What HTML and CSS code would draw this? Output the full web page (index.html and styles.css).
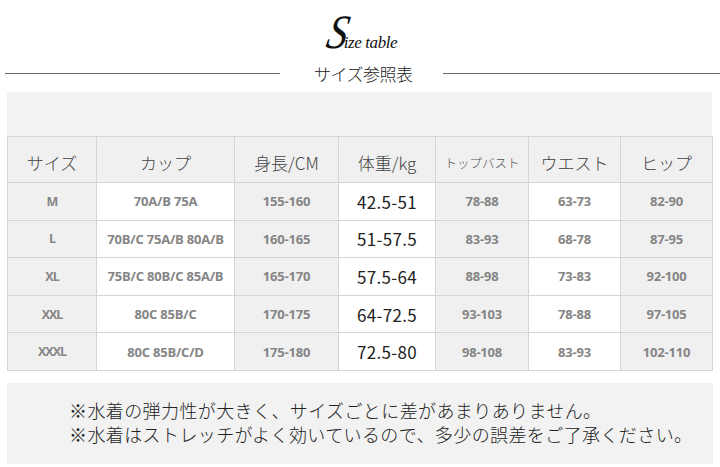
FILE: index.html
```html
<!DOCTYPE html>
<html lang="ja">
<head>
<meta charset="utf-8">
<link rel="stylesheet" href="styles.css">
</head>
<body>
<div class="page">
  <header class="head">
    <div class="script-title"><span class="cap">S</span><span class="rest">ize table</span></div>
    <div class="subtitle">
      <span class="rule rule-left"></span>
      <span class="subtitle-text">サイズ参照表</span>
      <span class="rule rule-right"></span>
    </div>
  </header>

  <section class="panel">
    <table class="size-table">
      <colgroup>
        <col class="c1"><col class="c2"><col class="c3"><col class="c4"><col class="c5"><col class="c6"><col class="c7">
      </colgroup>
      <thead>
        <tr>
          <th>サイズ</th>
          <th>カップ</th>
          <th>身長/CM</th>
          <th>体重/kg</th>
          <th class="small">トップバスト</th>
          <th>ウエスト</th>
          <th>ヒップ</th>
        </tr>
      </thead>
      <tbody>
        <tr>
          <td class="g sz">M</td><td class="w b">70A/B 75A</td><td class="g b">155-160</td><td class="w kg">42.5-51</td><td class="g b">78-88</td><td class="w b">63-73</td><td class="g b">82-90</td>
        </tr>
        <tr>
          <td class="g sz">L</td><td class="w b">70B/C 75A/B 80A/B</td><td class="g b">160-165</td><td class="w kg">51-57.5</td><td class="g b">83-93</td><td class="w b">68-78</td><td class="g b">87-95</td>
        </tr>
        <tr>
          <td class="g sz">XL</td><td class="w b">75B/C 80B/C 85A/B</td><td class="g b">165-170</td><td class="w kg">57.5-64</td><td class="g b">88-98</td><td class="w b">73-83</td><td class="g b">92-100</td>
        </tr>
        <tr>
          <td class="g sz">XXL</td><td class="w b">80C 85B/C</td><td class="g b">170-175</td><td class="w kg">64-72.5</td><td class="g b">93-103</td><td class="w b">78-88</td><td class="g b">97-105</td>
        </tr>
        <tr>
          <td class="g sz">XXXL</td><td class="w b">80C 85B/C/D</td><td class="g b">175-180</td><td class="w kg">72.5-80</td><td class="g b">98-108</td><td class="w b">83-93</td><td class="g b">102-110</td>
        </tr>
      </tbody>
    </table>
  </section>

  <section class="note">
    <p>※水着の弾力性が大きく、サイズごとに差があまりありません。</p>
    <p>※水着はストレッチがよく効いているので、多少の誤差をご了承ください。</p>
  </section>
</div>
</body>
</html>
```

FILE: styles.css
```css
* { box-sizing: border-box; }
html, body { margin: 0; padding: 0; background: #fff; }
body {
  font-family: "Noto Sans CJK JP", "Noto Sans", sans-serif;
  color: #333;
  width: 720px;
  height: 467px;
  overflow: hidden;
}
.page { width: 720px; }

.head { height: 92px; padding-top: 10px; }
.script-title {
  text-align: center;
  font-family: "Liberation Serif", "DejaVu Serif", serif;
  font-style: italic;
  color: #111;
  height: 44px;
  line-height: 44px;
  padding-left: 4px;
  font-size: 16px;
}
.script-title .cap {
  font-size: 48px;
  letter-spacing: -7px;
  display: inline-block;
  transform: skewX(-12deg) scaleX(0.85);
}
.script-title .rest { font-size: 17px; letter-spacing: -0.4px; }

.subtitle {
  display: flex;
  align-items: center;
  height: 30px;
  margin-top: 4px;
}
.rule { height: 1px; background: #666; display: block; }
.rule-left { width: 275px; margin-left: 5px; }
.rule-right { flex: 1; }
.subtitle-text {
  font-size: 17px;
  color: #222;
  margin: 0 30px 0 34px;
  letter-spacing: -0.5px;
  font-weight: 300;
}

.panel {
  margin-left: 7px;
  width: 705px;
  background: #f2f2f2;
  padding-top: 44px;
}

.size-table {
  border-collapse: collapse;
  width: 705px;
  table-layout: fixed;
}
.c1 { width: 89px; }
.c2 { width: 138px; }
.c3 { width: 104px; }
.c4 { width: 97px; }
.c5 { width: 93px; }
.c6 { width: 92px; }
.c7 { width: 92px; }

.size-table th, .size-table td {
  border: 1px solid #d5d5d5;
  text-align: center;
  padding: 0;
  white-space: nowrap;
}
.size-table th {
  height: 46px;
  background: #f0f0f0;
  font-weight: 300;
  font-size: 17px;
  color: #444;
  padding-top: 5px;
}
.size-table th.small { font-size: 12.5px; color: #555; }
.size-table td { height: 37.6px; }

.g { background: #f0f0f0; }
.w { background: #fff; }
.b, .sz {
  font-family: "Open Sans", "Liberation Sans", sans-serif;
  font-weight: 700;
  font-size: 13px;
  color: #858585;
  letter-spacing: -0.2px;
}
.sz { letter-spacing: -1px; font-size: 12.5px; }
.kg {
  font-size: 17px;
  color: #222;
  letter-spacing: 0.3px;
}

.note {
  margin: 12px 0 0 7px;
  width: 706px;
  height: 81px;
  background: #f2f2f2;
  padding: 15px 0 0 62px;
}
.note p {
  margin: 0;
  font-size: 18px;
  line-height: 24px;
  color: #222;
  letter-spacing: 0.4px;
  font-weight: 300;
}
```
